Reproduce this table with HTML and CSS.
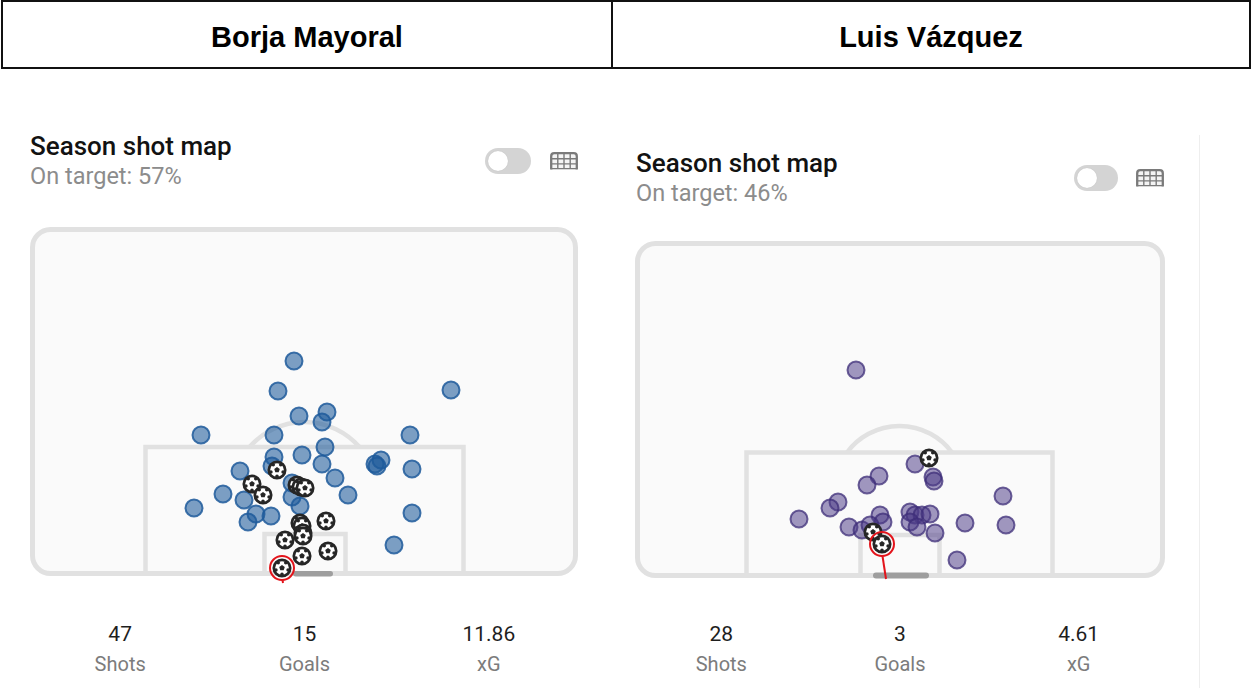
FILE: index.html
```html
<!DOCTYPE html>
<html lang="en">
<head>
<meta charset="utf-8">
<title>Shot map comparison</title>
<link rel="stylesheet" href="styles.css">
</head>
<body>
<header class="names">
  <div class="name name-a">Borja Mayoral</div>
  <div class="name name-b">Luis Vázquez</div>
</header>
<main class="compare">
  <section class="card card-a">
    <div class="head">
      <div class="titles">
        <h2>Season shot map</h2>
        <p class="sub">On target: 57%</p>
      </div>
      <div class="controls">
        <span class="toggle"><span class="knob"></span></span>
        <svg class="net" viewBox="0 0 30 19" width="30" height="19"><path d="M2.2 18.5V5.2Q2.2 2.2 5.2 2.2H24.8Q27.8 2.2 27.8 5.2V18.5" fill="#f4f4f4" stroke="#7a7a7a" stroke-width="2.3"/><path d="M8.8 2.5V18 M15 2.5V18 M21.2 2.5V18 M2.5 7.8H27.5 M2.5 12.9H27.5 M2.5 17.6H27.5" stroke="#7a7a7a" stroke-width="1.4" fill="none"/></svg>
      </div>
    </div>
    <svg class="pitch pitch-a" width="553" height="360" viewBox="28 225 553 360">
      <defs>
        <symbol id="ball" viewBox="-10 -10 20 20">
          <circle r="8.2" fill="#fff" stroke="#262626" stroke-width="2.7"/>
          <polygon points="0,-2.9 2.76,-0.9 1.7,2.35 -1.7,2.35 -2.76,-0.9" fill="#262626"/>
          <circle cx="3.76" cy="-5.18" r="1.8" fill="#262626"/>
          <circle cx="6.09" cy="1.98" r="1.8" fill="#262626"/>
          <circle cx="0" cy="6.4" r="1.8" fill="#262626"/>
          <circle cx="-6.09" cy="1.98" r="1.8" fill="#262626"/>
          <circle cx="-3.76" cy="-5.18" r="1.8" fill="#262626"/>
        </symbol>
      </defs>
      <rect x="32.5" y="229.5" width="543" height="344" rx="18" fill="#fafafa" stroke="#e1e1e1" stroke-width="5"/>
      <g fill="none" stroke="#e1e1e1" stroke-width="4.5">
        <path d="M145.5 573V447H463.5V573"/>
        <path d="M264.5 573V534H345.5V573"/>
        <path d="M249.5 447A73 73 0 0 1 359.5 447"/>
      </g>
      <rect x="293" y="571" width="40" height="5.5" rx="2.7" fill="#9e9e9e"/>
      <g fill="#1f5b9b" fill-opacity="0.58" stroke="#1f5b9b" stroke-opacity="0.85" stroke-width="2">
        <circle cx="294" cy="361" r="8.5"/><circle cx="278" cy="391" r="8.5"/><circle cx="451" cy="390" r="8.5"/>
        <circle cx="299" cy="416" r="8.5"/><circle cx="327" cy="412" r="8.5"/><circle cx="322" cy="422" r="8.5"/>
        <circle cx="201" cy="435" r="8.5"/><circle cx="274" cy="435" r="8.5"/><circle cx="410" cy="435" r="8.5"/>
        <circle cx="325" cy="447" r="8.5"/><circle cx="302" cy="455" r="8.5"/><circle cx="274" cy="457" r="8.5"/>
        <circle cx="322" cy="464" r="8.5"/><circle cx="375" cy="464" r="8.5"/><circle cx="381" cy="460" r="8.5"/>
        <circle cx="377" cy="466" r="8.5"/><circle cx="412" cy="469" r="8.5"/><circle cx="240" cy="471" r="8.5"/>
        <circle cx="335" cy="478" r="8.5"/><circle cx="292" cy="483" r="8.5"/><circle cx="292" cy="497" r="8.5"/>
        <circle cx="348" cy="495" r="8.5"/><circle cx="223" cy="494" r="8.5"/><circle cx="244" cy="500" r="8.5"/>
        <circle cx="194" cy="508" r="8.5"/><circle cx="300" cy="506" r="8.5"/><circle cx="256" cy="514" r="8.5"/>
        <circle cx="271" cy="516" r="8.5"/><circle cx="248" cy="522" r="8.5"/><circle cx="412" cy="513" r="8.5"/>
        <circle cx="394" cy="545" r="8.5"/><circle cx="272" cy="466" r="8.5"/>
      </g>
      <g>
        <use href="#ball" x="267" y="460" width="20" height="20"/>
        <use href="#ball" x="242" y="474" width="20" height="20"/>
        <use href="#ball" x="253" y="485" width="20" height="20"/>
        <use href="#ball" x="287" y="475" width="20" height="20"/>
        <use href="#ball" x="291" y="477" width="20" height="20"/>
        <use href="#ball" x="295" y="478" width="20" height="20"/>
        <use href="#ball" x="290" y="513" width="20" height="20"/>
        <use href="#ball" x="292" y="516" width="20" height="20"/>
        <use href="#ball" x="293" y="523" width="20" height="20"/>
        <use href="#ball" x="293" y="526" width="20" height="20"/>
        <use href="#ball" x="316" y="511" width="20" height="20"/>
        <use href="#ball" x="275" y="530" width="20" height="20"/>
        <use href="#ball" x="292" y="546" width="20" height="20"/>
        <use href="#ball" x="318" y="541" width="20" height="20"/>
        <use href="#ball" x="272" y="558" width="20" height="20"/>
      </g>
      <circle cx="282" cy="568" r="12" fill="none" stroke="#e3141b" stroke-width="2"/>
      <path d="M282.5 580L283 583" stroke="#e3141b" stroke-width="2"/>
    </svg>
    <div class="stats">
      <div class="stat"><span class="num">47</span><span class="lbl">Shots</span></div>
      <div class="stat"><span class="num">15</span><span class="lbl">Goals</span></div>
      <div class="stat"><span class="num">11.86</span><span class="lbl">xG</span></div>
    </div>
  </section>

  <section class="card card-b">
    <div class="head">
      <div class="titles">
        <h2>Season shot map</h2>
        <p class="sub">On target: 46%</p>
      </div>
      <div class="controls">
        <span class="toggle"><span class="knob"></span></span>
        <svg class="net" viewBox="0 0 30 19" width="30" height="19"><path d="M2.2 18.5V5.2Q2.2 2.2 5.2 2.2H24.8Q27.8 2.2 27.8 5.2V18.5" fill="#f4f4f4" stroke="#7a7a7a" stroke-width="2.3"/><path d="M8.8 2.5V18 M15 2.5V18 M21.2 2.5V18 M2.5 7.8H27.5 M2.5 12.9H27.5 M2.5 17.6H27.5" stroke="#7a7a7a" stroke-width="1.4" fill="none"/></svg>
      </div>
    </div>
    <svg class="pitch pitch-b" width="536" height="345" viewBox="632 238 536 345">
      <rect x="637.5" y="243.5" width="525" height="332" rx="18" fill="#fafafa" stroke="#e1e1e1" stroke-width="5"/>
      <g fill="none" stroke="#e1e1e1" stroke-width="4.5">
        <path d="M746.5 575.5V452.5H1052.5V575.5"/>
        <path d="M860.5 575.5V535H939.5V575.5"/>
        <path d="M847 452.5A65.3 65.3 0 0 1 952 452.5"/>
      </g>
      <rect x="873" y="572.5" width="56" height="6" rx="3" fill="#9e9e9e"/>
      <g fill="#4a3a86" fill-opacity="0.52" stroke="#3d2e78" stroke-opacity="0.75" stroke-width="2">
        <circle cx="856" cy="370" r="8.5"/><circle cx="915" cy="464" r="8.5"/><circle cx="933" cy="477" r="8.5"/>
        <circle cx="934" cy="481" r="8.5"/><circle cx="879" cy="476" r="8.5"/><circle cx="867" cy="485" r="8.5"/>
        <circle cx="838" cy="502" r="8.5"/><circle cx="830" cy="508" r="8.5"/><circle cx="799" cy="519" r="8.5"/>
        <circle cx="1003" cy="496" r="8.5"/><circle cx="1006" cy="525" r="8.5"/><circle cx="965" cy="523" r="8.5"/>
        <circle cx="849" cy="527" r="8.5"/><circle cx="880" cy="515" r="8.5"/><circle cx="883" cy="522" r="8.5"/>
        <circle cx="910" cy="512" r="8.5"/><circle cx="915" cy="515" r="8.5"/><circle cx="922" cy="515" r="8.5"/>
        <circle cx="930" cy="514" r="8.5"/><circle cx="910" cy="522" r="8.5"/><circle cx="917" cy="527" r="8.5"/>
        <circle cx="935" cy="533" r="8.5"/><circle cx="862" cy="530" r="8.5"/><circle cx="870" cy="525" r="8.5"/>
        <circle cx="957" cy="560" r="8.5"/>
      </g>
      <path d="M882.5 556L886 579" stroke="#e3141b" stroke-width="2"/>
      <g>
        <use href="#ball" x="919" y="448" width="20" height="20"/>
        <use href="#ball" x="863" y="522" width="20" height="20"/>
        <use href="#ball" x="872" y="534" width="20" height="20"/>
      </g>
      <circle cx="882" cy="544" r="12" fill="none" stroke="#e3141b" stroke-width="2"/>
    </svg>
    <div class="stats">
      <div class="stat"><span class="num">28</span><span class="lbl">Shots</span></div>
      <div class="stat"><span class="num">3</span><span class="lbl">Goals</span></div>
      <div class="stat"><span class="num">4.61</span><span class="lbl">xG</span></div>
    </div>
  </section>
</main>
</body>
</html>
```

FILE: styles.css
```css
* { box-sizing: border-box; }

body {
  margin: 0;
  background: #ffffff;
  font-family: Roboto, "Noto Sans", sans-serif;
  color: #1a1a1a;
  overflow: hidden;
}

.names {
  display: flex;
  width: 1250px;
  height: 69px;
  margin-left: 1px;
  border: 2px solid #111111;
}

.name {
  display: flex;
  align-items: center;
  justify-content: center;
  padding-top: 6px;
  font-family: "Liberation Sans", Arial, sans-serif;
  font-weight: bold;
  font-size: 29px;
  color: #000000;
}

.name-a { width: 608px; }

.name-b {
  flex: 1;
  border-left: 2px solid #111111;
}

.compare {
  display: flex;
  align-items: flex-start;
}

.card-a {
  width: 612px;
  padding: 63px 0 0 28px;
}

.card-b {
  margin: 66px 0 0 8px;
  padding: 14px 31px 0 12px;
  min-height: 553px;
  border-right: 1px solid #eeeeee;
}

.head {
  display: flex;
  justify-content: space-between;
  align-items: center;
}

.card-a .head { width: 553px; padding: 0 2px 0 2px; }
.card-b .head { width: 536px; padding: 0 3px 0 4px; }

h2 {
  margin: 0;
  font-size: 26px;
  font-weight: 500;
  line-height: 28px;
  color: #121212;
}

.sub {
  margin: 3px 0 0;
  font-size: 23.5px;
  line-height: 26px;
  color: #8c8c8c;
}

.controls {
  display: flex;
  align-items: center;
  gap: 18px;
}

.card-b .controls { gap: 17px; }

.toggle {
  display: flex;
  align-items: center;
  width: 46px;
  height: 26px;
  padding: 3px;
  border-radius: 13px;
  background: #d4d4d4;
}

.card-b .toggle { width: 44px; }

.knob {
  width: 20px;
  height: 20px;
  border-radius: 50%;
  background: #ffffff;
  box-shadow: 0 0 1px rgba(0, 0, 0, 0.15);
}

.net { display: block; }

.pitch { display: block; }
.pitch-a { margin-top: 36px; }
.pitch-b { margin-top: 32px; }

.stats {
  display: grid;
  grid-template-columns: repeat(3, 1fr);
}

.card-a .stats { width: 553px; margin-top: 35px; }
.card-b .stats { width: 536px; margin-top: 37px; }

.stat {
  display: flex;
  flex-direction: column;
  align-items: center;
}

.num {
  font-size: 21px;
  line-height: 28px;
  color: #1e1e1e;
}

.lbl {
  margin-top: 3px;
  font-size: 20px;
  line-height: 26px;
  color: #7c7c7c;
}
```
